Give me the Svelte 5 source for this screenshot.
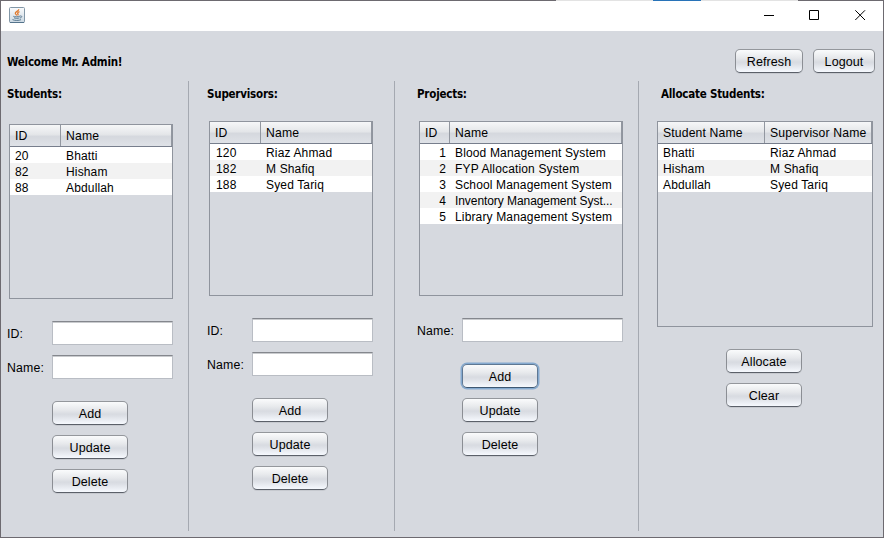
<script>
  const panels = [
    {
      key: 'students', title: 'Students:', headers: ['ID', 'Name'],
      rows: [['20', 'Bhatti'], ['82', 'Hisham'], ['88', 'Abdullah']],
      fields: ['ID:', 'Name:'], actions: ['Add', 'Update', 'Delete']
    },
    {
      key: 'supervisors', title: 'Supervisors:', headers: ['ID', 'Name'],
      rows: [['120', 'Riaz Ahmad'], ['182', 'M Shafiq'], ['188', 'Syed Tariq']],
      fields: ['ID:', 'Name:'], actions: ['Add', 'Update', 'Delete']
    },
    {
      key: 'projects', title: 'Projects:', headers: ['ID', 'Name'],
      rows: [
        ['1', 'Blood Management System'],
        ['2', 'FYP Allocation System'],
        ['3', 'School Management System'],
        ['4', 'Inventory Management Syst...'],
        ['5', 'Library Management System']
      ],
      fields: ['Name:'], actions: ['Add', 'Update', 'Delete'], focused: 'Add'
    },
    {
      key: 'allocate', title: 'Allocate Students:', headers: ['Student Name', 'Supervisor Name'],
      rows: [['Bhatti', 'Riaz Ahmad'], ['Hisham', 'M Shafiq'], ['Abdullah', 'Syed Tariq']],
      fields: [], actions: ['Allocate', 'Clear']
    }
  ];
</script>

<div class="window">
  <div class="edge"><i class="pale"></i><i class="blue"></i><i class="pale"></i></div>
  <header class="titlebar">
    <svg class="java" width="16" height="16" viewBox="0 0 16 16">
      <defs>
        <linearGradient id="tile" x1="0" y1="0" x2="0" y2="1">
          <stop offset="0" stop-color="#fafbfc" /><stop offset="1" stop-color="#cbd8e2" />
        </linearGradient>
      </defs>
      <rect x=".5" y=".5" width="15" height="15" rx="1" fill="url(#tile)" stroke="#8297a7" />
      <path d="M1 15.5H15" stroke="#54738b" />
      <path d="M9.8 2.2C10 4 6.2 4.7 6.3 6.3C6.4 7.2 7.5 7.8 7.8 8.5M10.5 4.6C8.5 5.4 8.3 6.2 9 7C9.3 7.5 9 8 8.7 8.4" fill="none" stroke="#e07a2e" stroke-width="1.3" />
      <path d="M4.3 9.3C5 10 9.5 10 10.8 9.2M5 10.8C6.5 11.6 9 11.4 10.3 10.9M10.8 9.1C13.4 8.4 13.4 10.6 10.8 11M3.5 12.6C5.5 13.8 10 13.6 12 12.7" fill="none" stroke="#5a7a91" stroke-width="1" />
    </svg>
    <div class="controls">
      <svg width="11" height="11" viewBox="0 0 11 11"><path d="M0 5.5H10" /></svg>
      <svg width="11" height="11" viewBox="0 0 11 11"><path d="M.5 .5H9.5V9.5H.5Z" /></svg>
      <svg class="close" width="11" height="11" viewBox="0 0 11 11"><path d="M.3 .3L10 10M10 .3L.3 10" /></svg>
    </div>
  </header>

  <div class="welcome">
    <h1>Welcome Mr. Admin!</h1>
    <button class="refresh">Refresh</button>
    <button class="logout">Logout</button>
  </div>

  <main>
    {#each panels as panel}
      <section class={panel.key}>
        <h2>{panel.title}</h2>
        <div class="grid">
          <div class="row head">
            {#each panel.headers as header}<span>{header}</span>{/each}
          </div>
          {#each panel.rows as row}
            <div class="row">
              {#each row as cell}<span class:tight={cell.endsWith('...')}>{cell}</span>{/each}
            </div>
          {/each}
        </div>
        <div class="form">
          {#each panel.fields as field}
            <label><span>{field}</span><input type="text" /></label>
          {/each}
        </div>
        <div class="actions">
          {#each panel.actions as action}
            <button class:focused={panel.focused === action}>{action}</button>
          {/each}
        </div>
      </section>
    {/each}
  </main>
</div>

<style>
  :global(body) { margin: 0; overflow: hidden; }
  * { box-sizing: border-box; }
  .window {
    position: relative; width: 884px; height: 538px;
    border: 1px solid #6d6a70; background: #d6d9df;
    font: 12px/16px "Liberation Sans", Arial, sans-serif;
    letter-spacing: .15px; color: #000;
    display: flex; flex-direction: column;
  }
  .edge { position: absolute; top: -1px; left: 555px; height: 1px; display: flex; }
  .edge i { width: 97px; height: 1px; }
  .edge .pale { background: #e3e3e3; }
  .edge .blue { width: 48px; background: #2873b8; }
  .titlebar {
    height: 30px; flex: none; background: #fff; display: flex;
    align-items: flex-start; justify-content: space-between; padding: 6px 17px 0 8px;
  }
  .controls { display: flex; gap: 34px; padding-top: 3px; }
  .controls svg { fill: none; stroke: #000; stroke-width: 1; display: block; }
  .controls .close { margin-left: 1px; }
  .welcome { height: 50px; flex: none; display: flex; padding: 18px 8px 0 6px; }
  h1, h2 {
    margin: 0; font: bold 11.5px/16px "DejaVu Sans Condensed", "DejaVu Sans", sans-serif;
    font-stretch: condensed;
    letter-spacing: -.22px; white-space: nowrap;
  }
  h1 { flex: 1; padding-top: 5px; }
  button {
    display: block; width: 76px; height: 24px; padding: 1px 0 0;
    font: inherit; font-size: 12.5px; letter-spacing: .1px; color: #000;
    border: 1px solid #8b8e94; border-top-color: #94979c; border-bottom-color: #5b6069;
    border-radius: 5px;
    background: linear-gradient(#fafbfc 0%, #e7e9ec 35%, #d8dbe1 55%, #dde0e6 65%, #f6f9fe 100%);
    box-shadow: 0 1px 0 #c6c9cf;
  }
  .focused { border-color: #5f7893; border-bottom-color: #3e5872; box-shadow: 0 0 0 1.5px #85aad0; }
  .refresh { width: 68px; margin-right: 10px; }
  .logout { width: 62px; }
  main { display: flex; height: 450px; }
  section { display: flex; flex-direction: column; border-right: 1px solid #a5a9b1; }
  h2 { height: 40px; padding-top: 5px; flex: none; }
  .grid { border: 1px solid #8f949d; height: 175px; flex: none; }
  .row { display: flex; height: 16px; background: #fff; line-height: 19px; white-space: nowrap; }
  .row:nth-child(odd) { background: #f2f2f2; }
  .row span { padding-left: 5px; flex: 1; }
  .row span:first-child { flex: none; width: 51px; }
  .row .tight { letter-spacing: -.07px; }
  .row.head {
    height: 22px; line-height: 22px; border-bottom: 1px solid #777e8c;
    background: linear-gradient(#f6f7f8, #e4e6e9 45%, #d5d8de 55%, #dfe2e7);
  }
  .head span { border-right: 1px solid #9297a0; font-size: 12.2px; }
  .form { display: flex; flex-direction: column; gap: 10px; margin-top: 22px; }
  label { display: flex; height: 24px; }
  label span { width: 45px; padding-top: 5px; font-size: 12.3px; }
  input {
    flex: 1; min-width: 0; height: 24px; padding: 0; border-radius: 0; outline: 0;
    border: 1px solid #b9bdc4; border-top: 1px solid #84878d;
    background: #fff; box-shadow: inset 0 1px #c9cbce;
  }
  .actions { display: flex; flex-direction: column; gap: 10px; margin: 22px 0 0 45px; }

  .students { width: 188px; padding-left: 6px; padding-right: 15px; }
  .students h2 { height: 43px; }
  .students .grid { margin-left: 2px; }
  .supervisors { width: 206px; padding-left: 18px; padding-right: 21px; }
  .supervisors .grid { margin-left: 2px; }
  .projects { width: 244px; padding-left: 22px; padding-right: 15px; }
  .projects .grid { margin-left: 2px; }
  .projects .row span:first-child { width: 30px; }
  .projects .row:not(.head) span:first-child { padding: 0 4px 0 0; text-align: right; }
  .allocate { width: 244px; padding-left: 18px; padding-right: 10px; border: 0; }
  .allocate h2 { padding-left: 4px; }
  .allocate .grid { height: 206px; }
  .allocate .row span:first-child { width: 107px; }
  .allocate .form { display: none; }
  .allocate .actions { margin-left: 69px; }
  .supervisors .row:not(.head) span:first-child { padding-left: 6px; }
</style>
